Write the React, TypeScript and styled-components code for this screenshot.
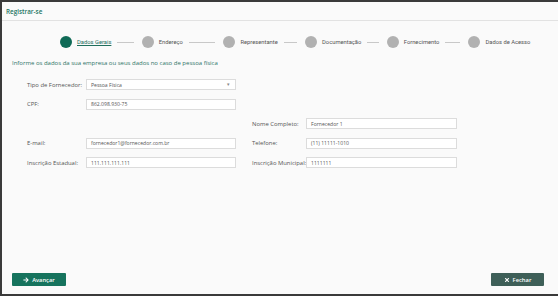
import React from "react";
import styled, { createGlobalStyle } from "styled-components";
import { FaArrowRight, FaTimes } from "react-icons/fa";

const Global = createGlobalStyle`
  html, body { margin: 0; padding: 0; background: #fafafa; }
  * { box-sizing: border-box; }
`;

const Frame = styled.div`
  width: 558px;
  height: 296px;
  background: #fafafa;
  border-top: 2px solid #3a3a3a;
  border-left: 2px solid #3a3a3a;
  border-bottom: 2px solid #3a3a3a;
  display: flex;
  flex-direction: column;
  font-family: "Open Sans", "Liberation Sans", sans-serif;
  overflow: hidden;
`;

const Header = styled.div`
  height: 19px;
  border-bottom: 1px solid #e2e2e2;
  display: flex;
  align-items: center;
  padding-left: 4px;
  font-size: 6.3px;
  font-weight: 600;
  color: #237563;
`;

const Stepper = styled.div`
  display: grid;
  grid-template-columns: repeat(6, 81.7px);
  margin-top: 15px;
  padding-left: 58px;
  height: 12px;
`;

const Step = styled.div`
  display: flex;
  align-items: center;
`;

const Dot = styled.span<{ $active?: boolean }>`
  width: 12px;
  height: 12px;
  border-radius: 50%;
  flex: none;
  background: ${(p) => (p.$active ? "#0f6a56" : "#b1b1b1")};
`;

const StepLabel = styled.span<{ $active?: boolean }>`
  margin-left: 5px;
  font-family: Roboto, "Open Sans", sans-serif;
  font-size: 5.8px;
  white-space: nowrap;
  color: ${(p) => (p.$active ? "#1f6e5c" : "#555")};
  text-decoration: ${(p) => (p.$active ? "underline" : "none")};
`;

const StepLine = styled.span`
  flex: 1;
  height: 1px;
  background: #c8c8c8;
  margin: 0 8px 0 6px;
`;

const Intro = styled.div`
  margin-top: 11px;
  padding-left: 10px;
  font-size: 6px;
  color: #2e7468;
`;

const Form = styled.div`
  display: grid;
  grid-template-columns: 225px 220px;
  grid-template-rows: repeat(5, 19.5px);
  margin-top: 12px;
  padding-left: 25px;
`;

const Field = styled.div<{ $col: number; $row: number; $labelW: number; $inputW: number }>`
  grid-column: ${(p) => p.$col};
  grid-row: ${(p) => p.$row};
  display: grid;
  grid-template-columns: ${(p) => p.$labelW}px ${(p) => p.$inputW}px;
  align-items: center;
  height: 11px;
`;

const Label = styled.span`
  font-size: 5.9px;
  color: #555;
  white-space: nowrap;
`;

const Input = styled.div`
  height: 11px;
  background: #fff;
  border: 1px solid #dcdcdc;
  display: flex;
  align-items: center;
  padding-left: 4px;
  font-size: 5.1px;
  color: #555;
  position: relative;
`;

const Caret = styled.span`
  position: absolute;
  right: 5px;
  top: 1px;
  font-size: 5px;
  color: #888;
`;

const Spacer = styled.div`
  flex: 1;
`;

const Footer = styled.div`
  display: flex;
  justify-content: space-between;
  padding: 0 14px 8px 10px;
`;

const Button = styled.button<{ $variant: "primary" | "dark" }>`
  height: 13px;
  width: ${(p) => (p.$variant === "primary" ? 54 : 53)}px;
  border: none;
  border-radius: 1px;
  background: ${(p) => (p.$variant === "primary" ? "#16735d" : "#3e5f58")};
  color: #fff;
  display: flex;
  align-items: center;
  justify-content: center;
  gap: 3px;
  font-family: "Open Sans", sans-serif;
  font-size: 5.8px;
  font-weight: 600;
  padding: 0;
  svg { width: 6px; height: 6px; }
`;

const fields = [
  { col: 1, row: 1, label: "Tipo de Fornecedor:", value: "Pessoa Física", select: true },
  { col: 1, row: 2, label: "CPF:", value: "862.098.930-75" },
  { col: 2, row: 3, label: "Nome Completo:", value: "Fornecedor 1" },
  { col: 1, row: 4, label: "E-mail:", value: "fornecedor1@fornecedor.com.br" },
  { col: 2, row: 4, label: "Telefone:", value: "(11) 11111-1010" },
  { col: 1, row: 5, label: "Inscrição Estadual:", value: "111.111.111.111" },
  { col: 2, row: 5, label: "Inscrição Municipal:", value: "1111111" },
];

const steps = ["Dados Gerais", "Endereço", "Representante", "Documentação", "Fornecimento", "Dados de Acesso"];

export default function App() {
  return (
    <>
      <Global />
      <Frame>
        <Header>Registrar-se</Header>
        <Stepper>
          {steps.map((s, i) => (
            <Step key={s}>
              <Dot $active={i === 0} />
              <StepLabel $active={i === 0}>{s}</StepLabel>
              {i < steps.length - 1 && <StepLine />}
            </Step>
          ))}
        </Stepper>
        <Intro>Informe os dados da sua empresa ou seus dados no caso de pessoa física</Intro>
        <Form>
          {fields.map((f) => (
            <Field
              key={f.label}
              $col={f.col}
              $row={f.row}
              $labelW={f.col === 1 ? 59 : 54}
              $inputW={f.col === 1 ? 150 : 151}
            >
              <Label>{f.label}</Label>
              <Input>
                {f.value}
                {f.select && <Caret>▾</Caret>}
              </Input>
            </Field>
          ))}
        </Form>
        <Spacer />
        <Footer>
          <Button $variant="primary">
            <FaArrowRight /> Avançar
          </Button>
          <Button $variant="dark">
            <FaTimes /> Fechar
          </Button>
        </Footer>
      </Frame>
    </>
  );
}
